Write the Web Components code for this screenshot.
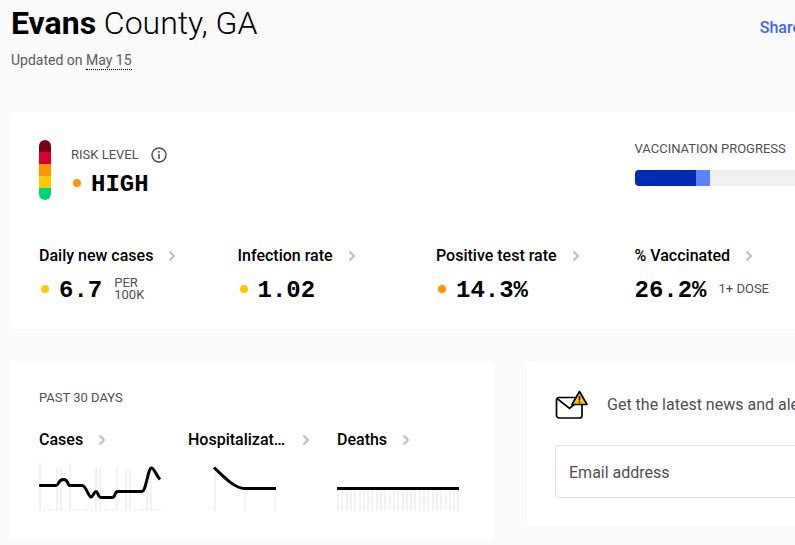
<!DOCTYPE html>
<html lang="en">
<head>
<meta charset="utf-8">
<title>Evans County, GA</title>
<style>
html { background: #fafafa; overflow: hidden; }
body { margin: 0; font-family: Roboto, "Liberation Sans", sans-serif; color: #000; }
</style>
</head>
<body>
<county-page>
  <location-header name="Evans" region="County, GA" updated="May 15"></location-header>
  <panel-card class="overview">
    <risk-level level="HIGH"></risk-level>
    <vaccine-progress></vaccine-progress>
    <metric-value label="Daily new cases" color="#ffc900" value="6.7">PER<br>100K</metric-value>
    <metric-value label="Infection rate" color="#ffc900" value="1.02"></metric-value>
    <metric-value label="Positive test rate" color="#ff9600" value="14.3%"></metric-value>
    <metric-value label="% Vaccinated" value="26.2%">1+ DOSE</metric-value>
  </panel-card>
  <panel-card slot="lower" class="history">
    <section-label>PAST 30 DAYS</section-label>
    <spark-chart label="Cases" kind="cases"></spark-chart>
    <spark-chart label="Hospitalizations" kind="hospital"></spark-chart>
    <spark-chart label="Deaths" kind="deaths"></spark-chart>
  </panel-card>
  <panel-card slot="lower" class="signup">
    <alert-signup></alert-signup>
  </panel-card>
</county-page>
<script>
const define = (tag, render) => customElements.define(tag, class extends HTMLElement {
  connectedCallback() {
    if (this.shadowRoot) return;
    this.attachShadow({ mode: 'open' }).innerHTML = render(this);
  }
});
const chevron = `<svg width="8" height="12" viewBox="0 0 8 12" aria-hidden="true"><path d="M1.5 1.5 6 6l-4.5 4.5" fill="none" stroke="#bdbdbd" stroke-width="2"/></svg>`;

define('county-page', () => `
<style>
:host { display: flex; flex-direction: column; min-width: 850px; padding: 0 16px 0 11px; }
.lower { display: grid; grid-template-columns: auto 1fr; align-items: start; gap: 32px; margin-top: 32px; }
</style>
<slot></slot><div class="lower"><slot name="lower"></slot></div>`);

define('location-header', el => `
<style>
:host { display: flex; justify-content: space-between; align-items: flex-start; padding: 4px 60px 42px 0; }
h1 { margin: 0; font-size: 32px; line-height: 38px; font-weight: 300; }
b { font-weight: 700; }
p { margin: 8px 0 0; font-size: 14px; line-height: 20px; color: #5a5a5a; }
span { border-bottom: 1px dotted #000; padding-bottom: 1px; }
button { border: 0; background: none; padding: 0; margin-top: 12px; font: 500 16px/24px Roboto, sans-serif; color: #4264fb; }
</style>
<div><h1><b>${el.getAttribute('name')}</b> ${el.getAttribute('region')}</h1>
<p>Updated on <span>${el.getAttribute('updated')}</span></p></div>
<button type="button">Share</button>`);

define('panel-card', () => `
<style>
:host { display: grid; box-sizing: border-box; background: #fff; border-radius: 4px; padding: 28px; }
:host(.overview) { grid-template-columns: repeat(4, 1fr); row-gap: 43px; padding-bottom: 27px; }
:host(.history) { grid-template-columns: repeat(3, 122px); column-gap: 27px; row-gap: 20px; padding-right: 36px; }
</style><slot></slot>`);

define('section-label', () => `
<style>:host { display: block; grid-column: 1 / -1; font-size: 13px; line-height: 18px; color: #4f4f4f; }</style><slot></slot>`);

define('risk-level', el => `
<style>
:host { grid-column: span 3; display: flex; gap: 20px; }
.scale { width: 12px; height: 60px; border-radius: 6px; background: linear-gradient(#790019 20%, #d9002c 20% 40%, #ff9600 40% 60%, #ffc900 60% 80%, #00d474 80%); }
.text { display: flex; flex-direction: column; gap: 5px; padding-top: 5px; }
.top, .level { display: flex; align-items: center; }
.top { gap: 12px; font-size: 13px; line-height: 20px; color: #4f4f4f; }
button { display: flex; border: 0; background: none; padding: 0; }
.level { gap: 10px; height: 26px; padding-left: 2px; font: 700 24px/26px "Liberation Mono", monospace; }
.level span { padding-top: 4px; }
i { width: 8px; height: 8px; border-radius: 50%; background: #ff9600; }
</style>
<div class="scale"></div>
<div class="text"><div class="top"><span>RISK LEVEL</span><button type="button" aria-label="About risk level"><svg width="16" height="16" viewBox="0 0 16 16"><circle cx="8" cy="8" r="7" fill="none" stroke="#4f4f4f" stroke-width="1.5"/><path d="M8 7v5M8 4v1.7" stroke="#4f4f4f" stroke-width="1.6"/></svg></button></div>
<div class="level"><i></i><span>${el.getAttribute('level')}</span></div></div>`);

define('vaccine-progress', () => `
<style>
:host { display: flex; flex-direction: column; gap: 12px; }
.bar { display: flex; height: 16px; border-radius: 4px; overflow: hidden; background: #f0f0f0; }
.full { width: 31%; background: #002cb4; }
.some { width: 7%; background: #5b83ff; }
</style>
<section-label>VACCINATION PROGRESS</section-label>
<div class="bar"><div class="full"></div><div class="some"></div></div>`);

define('metric-value', el => `
<style>
:host { display: flex; flex-direction: column; gap: 7px; }
a { display: flex; align-items: center; gap: 15px; color: #000; text-decoration: none; font-size: 16px; line-height: 26px; font-weight: 500; white-space: nowrap; }
.row { display: flex; align-items: center; height: 26px; }
.dot { width: 8px; height: 8px; border-radius: 50%; margin: 0 10px 0 2px; background: ${el.getAttribute('color')}; }
.value { padding-top: 4px; font: 700 24px/26px "Liberation Mono", monospace; }
.unit { margin-left: 12px; font-size: 13px; line-height: 12px; color: #4f4f4f; }
</style>
<a href="#"><span>${el.getAttribute('label')}</span>${chevron}</a>
<div class="row">${el.hasAttribute('color') ? '<i class="dot"></i>' : ''}<span class="value">${el.getAttribute('value')}</span><span class="unit"><slot></slot></span></div>`);

const rects = (xs, y, h) => xs.map(x => `<rect x="${x}" y="${y}" width="2" height="${h}"/>`).join('');
const days = Array.from({ length: 29 }, (_, i) => Math.round(i * 4.3));
const charts = {
  cases: [rects([0, 30], 0, 48) + rects([17, 21, 56, 60, 77, 86, 90, 107, 111], 5, 43) + rects(days, 46, 2),
    'M0 22.5H17C20 22.5 19 16.5 24.5 16.5S28 22.5 31 22.5H43C47 22.5 49 33 52 34C54 34 55 28.5 57 28.5S59 34.5 62 34.5H73C77 34.5 75 28.5 79 28.5H103C107 28.5 109 5 112.5 5C115 5 117 12 121 16.5'],
  hospital: [rects([26], 5, 43) + rects([56, 86], 25, 23), 'M26 4.5C34 12 46 25.5 56.5 25.5H88'],
  deaths: [rects(days, 25, 23), 'M0 25.5H122']
};
define('spark-chart', el => {
  const [bars, line] = charts[el.getAttribute('kind')];
  return `
<style>
:host { display: flex; flex-direction: column; gap: 10px; }
a { display: flex; align-items: center; gap: 15px; color: #000; text-decoration: none; font-size: 16px; line-height: 26px; font-weight: 500; }
span { overflow: hidden; white-space: nowrap; text-overflow: ellipsis; }
.end { flex: none; display: flex; }
.chart { display: block; overflow: visible; }
</style>
<a href="#"><span>${el.getAttribute('label')}</span><div class="end">${chevron}</div></a>
<svg class="chart" width="122" height="48" viewBox="0 0 122 48" aria-hidden="true"><g fill="#f2f2f2">${bars}</g><path d="${line}" fill="none" stroke="#000" stroke-width="3" stroke-linejoin="round"/></svg>`;
});

define('alert-signup', () => `
<style>
:host { display: flex; flex-direction: column; gap: 24px; }
.top { display: flex; align-items: center; gap: 18px; height: 32px; white-space: nowrap; }
svg { flex: none; }
label { font-size: 16px; line-height: 24px; color: #4f4f4f; }
input { box-sizing: border-box; width: 100%; height: 53px; border: 1px solid #e0e0e0; border-radius: 4px; padding: 2px 13px 0; font: 16px Roboto, sans-serif; }
input::placeholder { color: #4f4f4f; opacity: 1; }
</style>
<div class="top"><svg width="34" height="32" viewBox="0 0 34 32" aria-hidden="true">
<rect x="1.5" y="8.5" width="25.5" height="20.5" rx="2.5" fill="#fff" stroke="#000" stroke-width="1.7"/>
<path d="M2 9.5 14.500 19.500l8-7" fill="none" stroke="#000" stroke-width="1.7"/>
<path d="M24.5 2.500 32 15.5H17Z" fill="#ffc900" stroke="#000" stroke-width="1.7" stroke-linejoin="round"/>
<path d="M24.5 7v4.5M24.5 12.5v1.5" stroke="#000" stroke-width="1.5"/></svg>
<label for="email">Get the latest news and alerts</label></div>
<input id="email" type="email" placeholder="Email address">`);
</script>
</body>
</html>
